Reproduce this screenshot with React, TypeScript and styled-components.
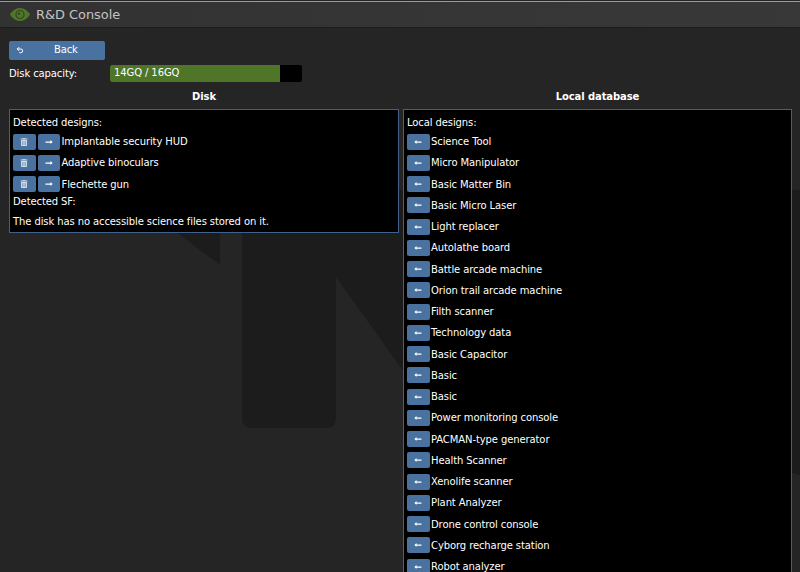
import React from "react";
import styled, { createGlobalStyle } from "styled-components";
import { FaLongArrowAltLeft, FaLongArrowAltRight, FaTrashAlt } from "react-icons/fa";
import { Undo2 } from "lucide-react";

const Global = createGlobalStyle`
  html, body { margin: 0; height: 100%; overflow: hidden; background: #252525; }
  #root { height: 100%; }
`;

const Page = styled.div`
  position: relative;
  width: 800px;
  height: 572px;
  overflow: hidden;
  background: #252525;
  color: #fff;
  font: 10px "DejaVu Sans", Verdana, sans-serif;
  letter-spacing: -0.1px;
`;

const Watermark = styled.svg`
  position: absolute;
  left: 0;
  top: 0;
  width: 800px;
  height: 572px;
`;

const TitleBar = styled.header`
  position: relative;
  height: 27px;
  box-sizing: border-box;
  margin-top: 1px;
  border-top: 1px solid #9a9a9a;
  border-bottom: 1px solid #1d1d1d;
  background: linear-gradient(90deg, #323232, #383838);
  display: flex;
  align-items: center;
  padding-left: 10px;
  gap: 6px;
  color: #c4c4c4;
  font-size: 12.9px;
  letter-spacing: 0;
`;

const Body = styled.main`
  position: relative;
  padding: 13px 8px 0 9px;
  display: flex;
  flex-direction: column;
`;

const BackButton = styled.button`
  width: 96px;
  height: 19px;
  box-sizing: border-box;
  border: 0;
  border-radius: 2px;
  background: #4972a1;
  color: #fff;
  font: inherit;
  letter-spacing: -0.15px;
  display: flex;
  align-items: center;
  padding: 0 0 2px 7px;
  svg { width: 8px; height: 8px; }
  span { margin-left: 30px; }
`;

const CapacityRow = styled.div`
  display: flex;
  align-items: center;
  height: 17px;
  margin-top: 5px;
`;

const CapacityLabel = styled.div`
  width: 101px;
`;

const Bar = styled.div`
  width: 192px;
  height: 17px;
  border-radius: 2px;
  background: #000;
  overflow: hidden;
`;

const BarFill = styled.div`
  height: 100%;
  width: 88.5%;
  background: #4f7529;
  box-sizing: border-box;
  padding-left: 4px;
  line-height: 15px;
  white-space: nowrap;
`;

const Columns = styled.div`
  display: grid;
  grid-template-columns: 390px 389px;
  column-gap: 4px;
  margin-top: 6px;
`;

const Column = styled.section`
  min-width: 0;
`;

const ColumnTitle = styled.h2`
  margin: 0;
  height: 21px;
  line-height: 17px;
  text-align: center;
  font-size: 10px;
  font-weight: 700;
`;

const Panel = styled.div`
  box-sizing: border-box;
  border: 1px solid #40628a;
  background: #000;
  padding: 3px 3px 1.25px;
`;

const Heading = styled.div`
  height: 18px;
  line-height: 20px;
  white-space: nowrap;
`;

const SubHeading = styled.div`
  height: 18px;
  line-height: 18px;
  margin-top: -2px;
  white-space: nowrap;
`;

const Note = styled.div`
  height: 20px;
  line-height: 22px;
  white-space: nowrap;
`;

const Row = styled.div`
  display: flex;
  align-items: center;
  height: 21.25px;
  white-space: nowrap;
`;

const IconButton = styled.button`
  width: 22.5px;
  height: 16px;
  box-sizing: border-box;
  border: 0;
  border-radius: 2px;
  padding: 0;
  margin-right: 1.5px;
  background: #4972a1;
  color: #fff;
  display: inline-flex;
  align-items: center;
  justify-content: center;
  flex: none;
  svg { width: 8px; height: 8px; }
`;

const TrashButton = styled(IconButton)`
  color: #cfdbe8;
  margin-right: 2px;
`;

const diskDesigns = ["Implantable security HUD", "Adaptive binoculars", "Flechette gun"];
const localDesigns = [
  "Science Tool", "Micro Manipulator", "Basic Matter Bin", "Basic Micro Laser", "Light replacer",
  "Autolathe board", "Battle arcade machine", "Orion trail arcade machine", "Filth scanner",
  "Technology data", "Basic Capacitor", "Basic", "Basic", "Power monitoring console",
  "PACMAN-type generator", "Health Scanner", "Xenolife scanner", "Plant Analyzer",
  "Drone control console", "Cyborg recharge station", "Robot analyzer",
];

export default function App() {
  return (
    <Page>
      <Global />
      <Watermark viewBox="0 0 800 572" aria-hidden="true">
        <path fill="#1c1c1c" d="M120 190 L220 265 V190 Z" />
        <path fill="#1c1c1c" d="M242 190 H800 V475 L404 372 L336 277 V418 Q336 428 326 428 H252 Q242 428 242 418 Z" />
      </Watermark>
      <TitleBar>
        <svg width="20" height="13" viewBox="0 0 20 13" aria-hidden="true">
          <path fill="#4f7529" d="M10 0C5.500 0 2 3 0 6.500C2 10 5.500 13 10 13s8-3 10-6.500C18 3 14.500 0 10 0Z" />
          <circle cx="10" cy="6.500" r="4" fill="none" stroke="#2f4420" strokeWidth="1.100" />
          <circle cx="9" cy="5.700" r="1.200" fill="#2f4420" />
        </svg>
        R&amp;D Console
      </TitleBar>
      <Body>
        <BackButton>
          <Undo2 strokeWidth={3} />
          <span>Back</span>
        </BackButton>
        <CapacityRow>
          <CapacityLabel>Disk capacity:</CapacityLabel>
          <Bar>
            <BarFill>14GQ / 16GQ</BarFill>
          </Bar>
        </CapacityRow>
        <Columns>
          <Column>
            <ColumnTitle>Disk</ColumnTitle>
            <Panel>
              <Heading>Detected designs:</Heading>
              {diskDesigns.map((name) => (
                <Row key={name}>
                  <TrashButton><FaTrashAlt /></TrashButton>
                  <IconButton><FaLongArrowAltRight /></IconButton>
                  <span>{name}</span>
                </Row>
              ))}
              <SubHeading>Detected SF:</SubHeading>
              <Note>The disk has no accessible science files stored on it.</Note>
            </Panel>
          </Column>
          <Column>
            <ColumnTitle>Local database</ColumnTitle>
            <Panel>
              <Heading>Local designs:</Heading>
              {localDesigns.map((name, i) => (
                <Row key={i}>
                  <IconButton><FaLongArrowAltLeft /></IconButton>
                  <span>{name}</span>
                </Row>
              ))}
            </Panel>
          </Column>
        </Columns>
      </Body>
    </Page>
  );
}
